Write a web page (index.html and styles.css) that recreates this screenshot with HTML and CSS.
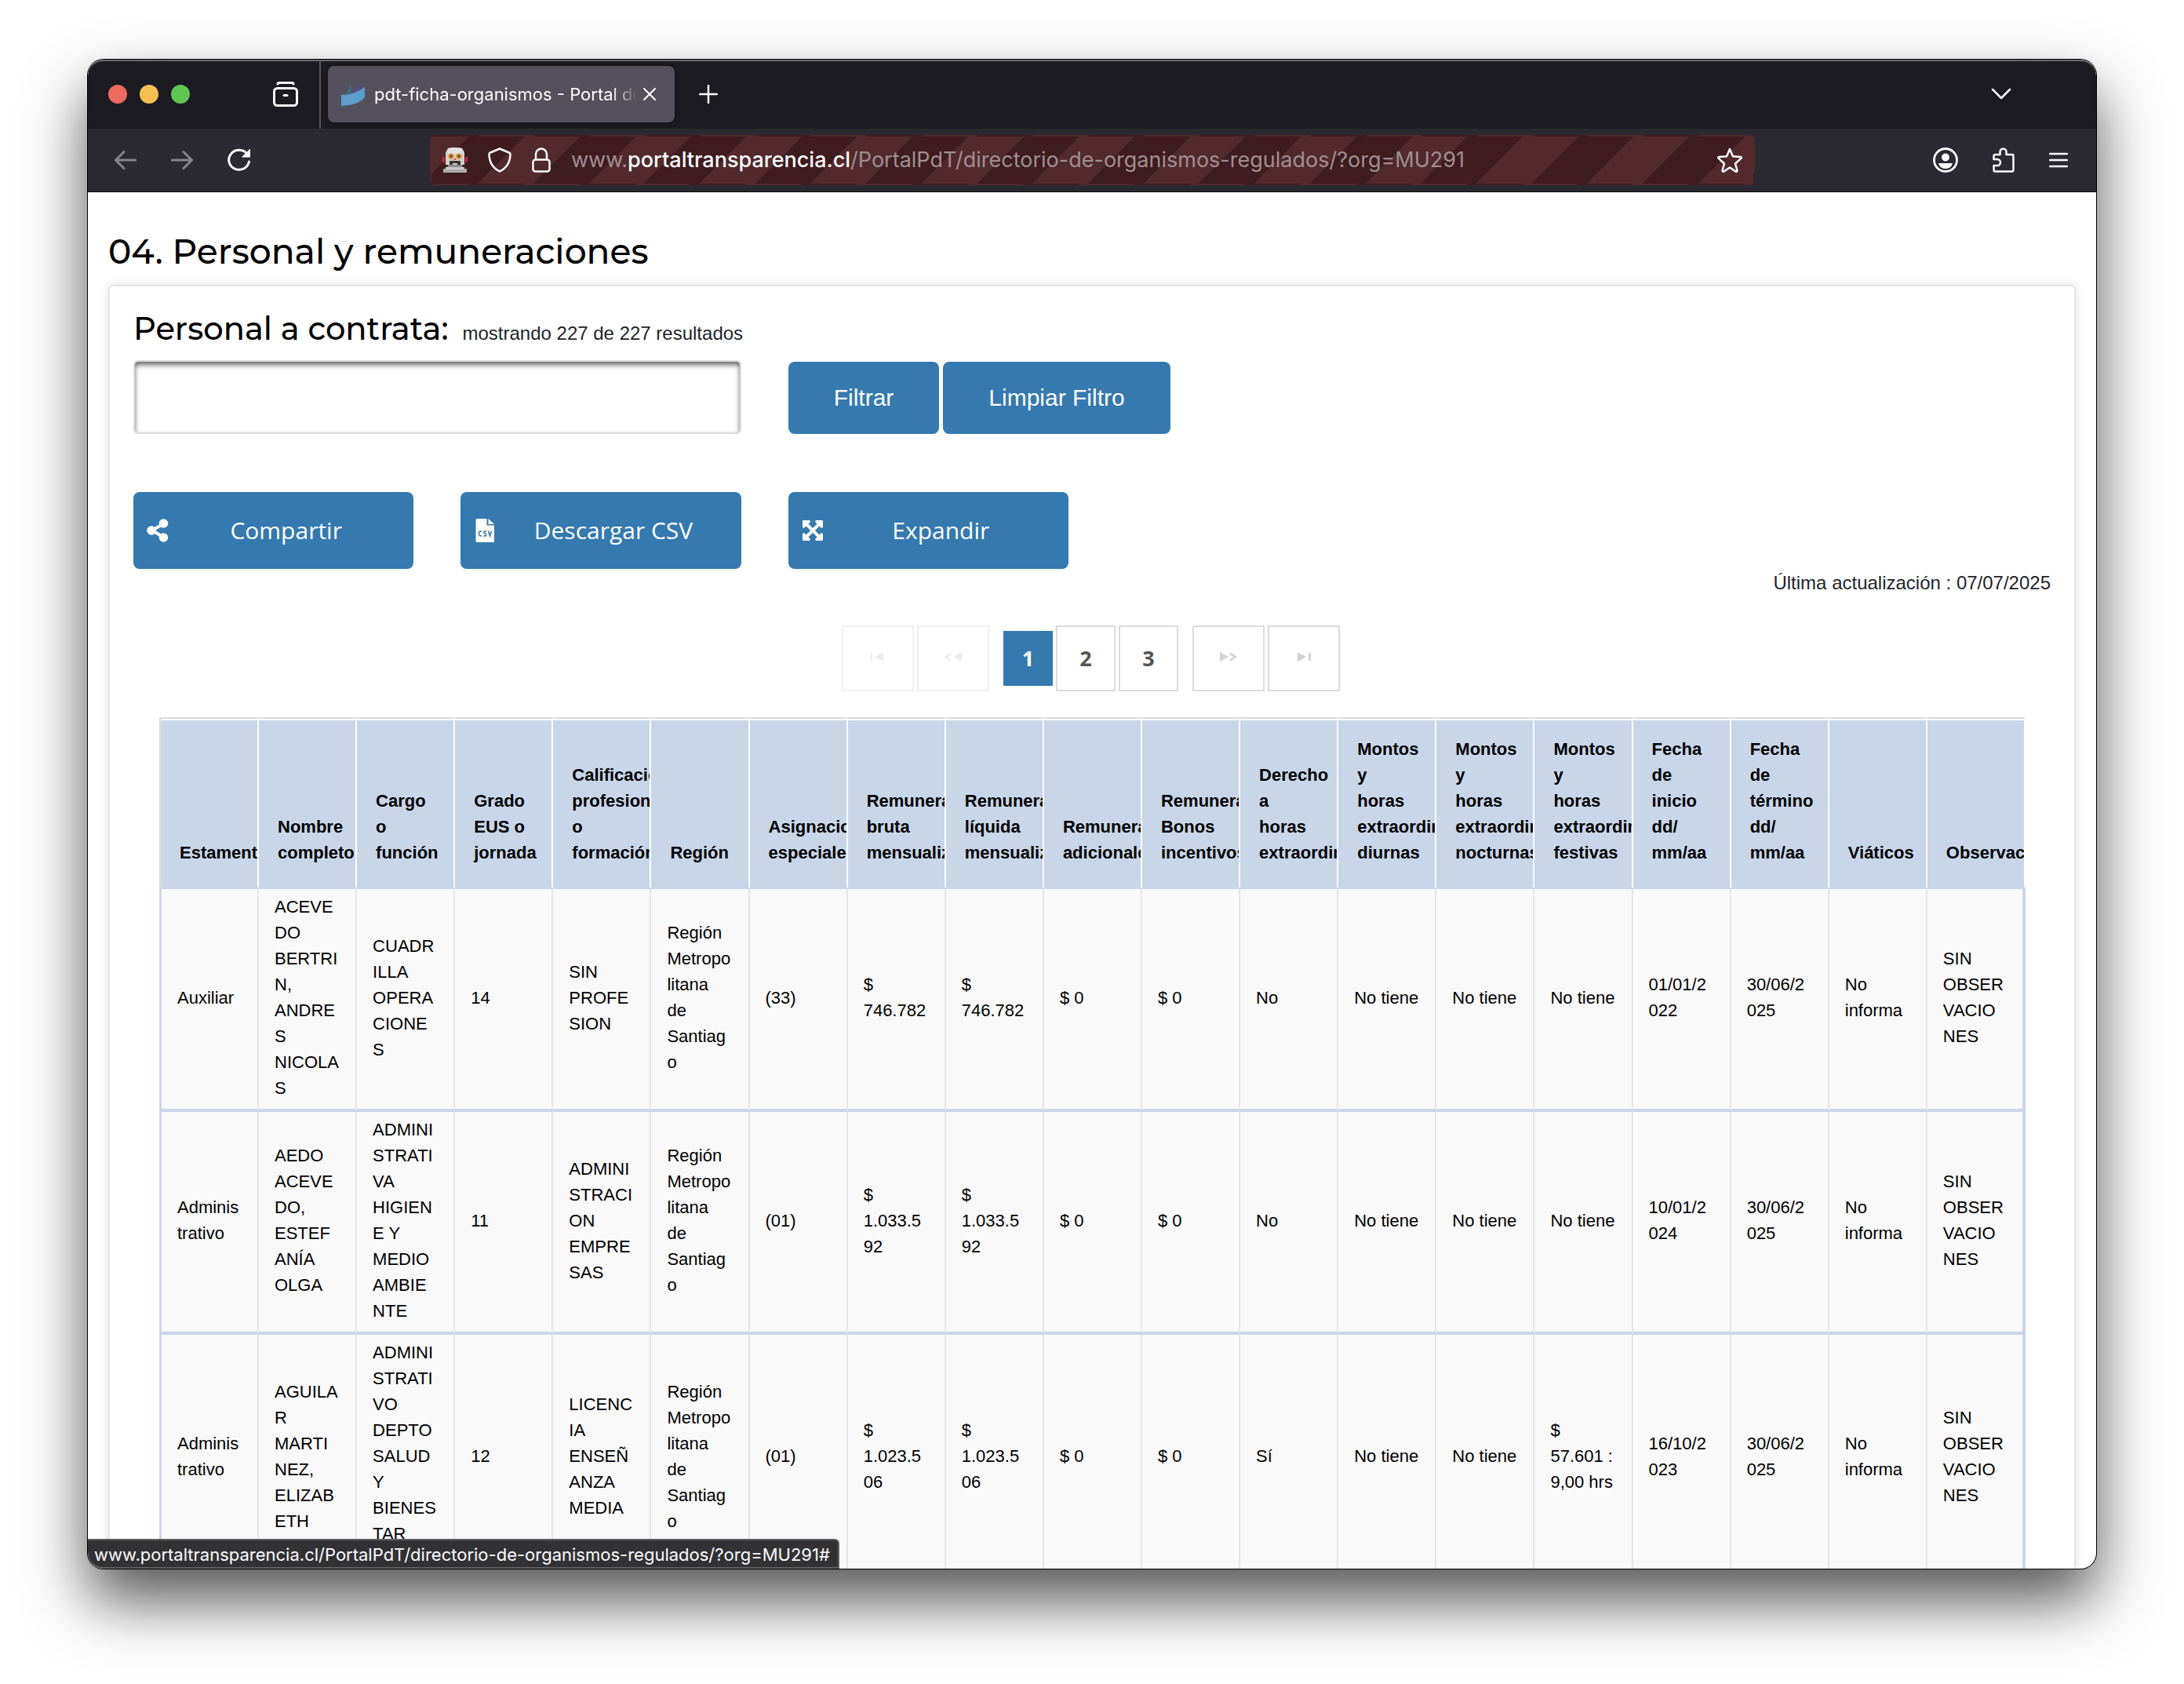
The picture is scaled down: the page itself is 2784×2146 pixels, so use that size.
FILE: index.html
```html
<!DOCTYPE html>
<html lang="es">
<head>
<meta charset="utf-8">
<title>pdt-ficha-organismos - Portal de Transparencia</title>
<link rel="stylesheet" href="styles.css">
</head>
<body>
<div class="window">
  <header class="tabbar">
    <div class="lights"><span class="light red"></span><span class="light yellow"></span><span class="light green"></span></div>
    <button class="icon-btn archive" aria-label="Firefox View">
      <svg width="32" height="32" viewBox="0 0 32 32" fill="none" stroke="#fbfbfe" stroke-width="3" stroke-linecap="round"><path d="M6 3Q6 1.500 8 1.500H24Q26 1.500 26 3"/><rect x="1.500" y="8.500" width="29" height="22" rx="4"/><path d="M14 17.500h4"/></svg>
    </button>
    <div class="tab">
      <svg class="favicon" width="30" height="30" viewBox="0 0 30 30"><path d="M5 15Q11 8 11 1Q14 6 12 14Z" fill="#3e6d7c"/><path d="M9 14Q20 8 23 0Q25 6 23 11Z" fill="#54508a"/><path d="M0 16Q16 16 30 6V19Q22 29 0 30Z" fill="#5c9fcf"/></svg>
      <span class="tab-title">pdt-ficha-organismos - Portal de Transparencia</span>
      <button class="icon-btn" aria-label="Cerrar pestaña"><svg width="16" height="16" viewBox="0 0 16 16" stroke="#fbfbfe" stroke-width="2" stroke-linecap="round"><path d="M1 1l14 14M15 1L1 15"/></svg></button>
    </div>
    <button class="icon-btn newtab" aria-label="Nueva pestaña"><svg width="24" height="24" viewBox="0 0 24 24" stroke="#fbfbfe" stroke-width="2.500" stroke-linecap="round"><path d="M12 1v22M1 12h22"/></svg></button>
    <button class="icon-btn alltabs" aria-label="Listar pestañas"><svg width="26" height="16" viewBox="0 0 26 16" fill="none" stroke="#fbfbfe" stroke-width="2.500" stroke-linecap="round" stroke-linejoin="round"><path d="M2 2l11 11L24 2"/></svg></button>
  </header>
  <div class="navbar">
    <div class="nav-left">
      <button class="icon-btn" aria-label="Atrás"><svg width="28" height="28" viewBox="0 0 28 28" fill="none" stroke="#85848a" stroke-width="3" stroke-linecap="round" stroke-linejoin="round"><path d="M27 14H2M12 3.500L1.500 14L12 24.500"/></svg></button>
      <button class="icon-btn" aria-label="Adelante"><svg width="28" height="28" viewBox="0 0 28 28" fill="none" stroke="#85848a" stroke-width="3" stroke-linecap="round" stroke-linejoin="round"><path d="M1 14h25M16 3.500L26.500 14L16 24.500"/></svg></button>
      <button class="icon-btn" aria-label="Recargar"><svg width="30" height="30" viewBox="0 0 30 30" fill="none" stroke="#fbfbfe" stroke-width="3" stroke-linecap="round"><path d="M27.500 17A13 12.500 0 1 1 24 6"/><path d="M28.500 1.500V11H19Z" fill="#fbfbfe" stroke-width="1" stroke-linejoin="round"/></svg></button>
    </div>
    <div class="urlbar">
      <svg width="32" height="32" viewBox="0 0 32 32"><path d="M0 11l3 2v7l-3-2zM32 11l-3 2v7l3-2z" fill="#c8283a"/><path d="M7 1Q16-1 25 1L28 6V22H4V6Z" fill="#cfcfcd"/><path d="M7 1Q16-1 25 1L25 8H7Z" fill="#e2e2e0"/><path d="M7 22h18l1 4H6z" fill="#8d8d8d"/><circle cx="11" cy="11" r="3.500" fill="#d98a2b"/><circle cx="21" cy="11" r="3.500" fill="#d98a2b"/><circle cx="11" cy="11" r="1.500" fill="#5b3a1a"/><circle cx="21" cy="11" r="1.500" fill="#5b3a1a"/><path d="M14 16l2-3 2 3z" fill="#e0542c"/><path d="M9 17h14v5h-4v-2h-6v2H9z" fill="#3b3230"/><path d="M1 27h30v5H1z" fill="#a9aaa9"/><path d="M4 25h24v3H4z" fill="#c9cac9"/></svg>
      <svg width="30" height="32" viewBox="0 0 30 32" fill="none" stroke="#fbfbfe" stroke-width="2.500" stroke-linejoin="round"><path d="M15 1.500L27 6.500Q28.500 7 28.500 9Q28 24 15 30.500Q2 24 1.500 9Q1.500 7 3 6.500Z"/></svg>
      <svg width="24" height="32" viewBox="0 0 24 32" fill="none" stroke="#fbfbfe" stroke-width="2.500"><rect x="1.500" y="15.500" width="21" height="15" rx="3"/><path d="M5 15.500V8.500a7 7 0 0 1 14 0v7"/></svg>
      <div class="url" role="textbox" aria-label="Dirección">www.<b>portaltransparencia.cl</b>/PortalPdT/directorio-de-organismos-regulados/?org=MU291</div>
      <button class="icon-btn" aria-label="Añadir a marcadores"><svg width="32" height="32" viewBox="0 0 32 32" fill="none" stroke="#fbfbfe" stroke-width="2.500" stroke-linejoin="round"><path d="M16 2l4 9.200 10.200.9q1 .5.300 1.500L23 20.500l2.500 9q-.5 1.500-2 1L16 25.500l-7.500 5q-1.500.5-2-1L9 20.500l-7.500-6.900q-.700-1 .3-1.500L12 11.200Z"/></svg></button>
    </div>
    <div class="nav-right">
      <button class="icon-btn" aria-label="Cuenta"><svg width="32" height="32" viewBox="0 0 32 32"><circle cx="16" cy="16" r="14.500" fill="none" stroke="#fbfbfe" stroke-width="2.800"/><circle cx="16" cy="12.500" r="5" fill="#fbfbfe"/><path d="M7 20h18q-1.500 7-9 7t-9-7z" fill="#fbfbfe"/></svg></button>
      <button class="icon-btn" aria-label="Extensiones"><svg width="28" height="32" viewBox="0 0 28 32" fill="none" stroke="#fbfbfe" stroke-width="2.500" stroke-linejoin="round"><path d="M1.500 15V11q0-2 2-2H9.500V5.500a4 4 0 0 1 8 0V9H25q1.500 0 1.500 2V28.500q0 2-2 2H3.500q-2 0-2-2V23H6a4 4 0 0 0 0-8Z"/></svg></button>
      <button class="icon-btn" aria-label="Menú"><svg width="24" height="22" viewBox="0 0 24 22" stroke="#fbfbfe" stroke-width="2.500" stroke-linecap="round"><path d="M1 3h22M1 11h22M1 19h22"/></svg></button>
    </div>
  </div>
  <main class="page">
    <h1>04. Personal y remuneraciones</h1>
    <section class="card">
      <div class="card-title"><h2><label for="filtro">Personal a contrata:</label></h2><span>mostrando 227 de 227 resultados</span></div>
      <form class="cols">
        <input id="filtro" class="filter" type="text">
        <div class="filter-actions">
          <button type="button" class="btn">Filtrar</button>
          <button type="button" class="btn">Limpiar Filtro</button>
        </div>
      </form>
      <div class="cols actions">
        <button class="btn action"><svg width="28" height="32" viewBox="0 0 28 32" fill="#fff"><path d="M7 16L22 7M7 16l15 9" stroke="#fff" stroke-width="4"/><circle cx="6" cy="16" r="5.800"/><circle cx="21.500" cy="7" r="5.800"/><circle cx="21.500" cy="25" r="5.800"/></svg><span>Compartir</span></button>
        <button class="btn action"><svg width="28" height="32" viewBox="0 0 28 32"><path d="M4 1H16.500V9.500H26V29.500Q26 31 24.500 31H4Q2.500 31 2.500 29.500V2.500Q2.500 1 4 1Z" fill="#fff"/><path d="M18.500 1L26 8H18.500Z" fill="#fff"/><path d="M10 17.500Q6.500 16 6.500 20Q6.500 24 10 22.500M16 17Q12.500 16.500 13 19Q16.500 20.500 15.500 22.500Q14 23.500 12.500 22.500M18.500 16.500L20.500 23L22.500 16.500" fill="none" stroke="#3579af" stroke-width="1.600"/></svg><span>Descargar CSV</span></button>
        <button class="btn action"><svg width="28" height="32" viewBox="0 0 28 32" fill="#fff"><path d="M4 6l20 20M24 6L4 26" stroke="#fff" stroke-width="4"/><path d="M1 4Q1 3 2 3H10L11 5L3 13L1 12ZM27 4Q27 3 26 3H18L17 5L25 13L27 12ZM1 28Q1 29 2 29H10L11 27L3 19L1 20ZM27 28Q27 29 26 29H18L17 27L25 19L27 20Z"/></svg><span>Expandir</span></button>
      </div>
      <p class="updated">Última actualización : 07/07/2025</p>
      <nav class="pager" aria-label="Paginación">
        <a class="step off" href="#" aria-label="Primera"><svg width="24" height="12" viewBox="0 0 24 12" fill="#d2d2d2"><path d="M3 1h2v10H3zM19 0v12L8 6z"/></svg></a>
        <a class="step off" href="#" aria-label="Anterior"><svg width="24" height="12" viewBox="0 0 24 12" fill="#d2d2d2"><path d="M23 0v12L12 6zM9 0L0 6l9 6V9L5 6l4-3z"/></svg></a>
        <div class="numbers">
          <a class="num current" href="#">1</a>
          <a class="num" href="#">2</a>
          <a class="num" href="#">3</a>
        </div>
        <a class="step" href="#" aria-label="Siguiente"><svg width="24" height="12" viewBox="0 0 24 12" fill="#d2d2d2"><path d="M1 0v12L12 6zM14 0L23 6l-9 6V9L18 6l-4-3z"/></svg></a>
        <a class="step" href="#" aria-label="Última"><svg width="24" height="12" viewBox="0 0 24 12" fill="#d2d2d2"><path d="M18 1h3v10h-3zM4 0v12L15 6z"/></svg></a>
      </nav>
      <table class="data">
        <thead>
          <tr>
            <th>Estamento</th><th>Nombre completo</th><th>Cargo o función</th><th>Grado EUS o jornada</th><th>Calificación profesional o formación</th><th>Región</th><th>Asignaciones especiales</th><th>Remuneración bruta mensualizada</th><th>Remuneración líquida mensualizada</th><th>Remuneraciones adicionales</th><th>Remuneración Bonos incentivos</th><th>Derecho a horas extraordinarias</th><th>Montos y horas extraordinarias diurnas</th><th>Montos y horas extraordinarias nocturnas</th><th>Montos y horas extraordinarias festivas</th><th>Fecha de inicio dd/<wbr>mm/aa</th><th>Fecha de término dd/<wbr>mm/aa</th><th>Viáticos</th><th>Observaciones</th>
          </tr>
        </thead>
        <tbody>
          <tr>
            <td>Auxiliar</td><td>ACEVEDO BERTRIN, ANDRES NICOLAS</td><td>CUADRILLA OPERACIONES</td><td>14</td><td>SIN PROFESION</td><td>Región Metropolitana de Santiago</td><td>(33)</td><td>$ 746.782</td><td>$ 746.782</td><td>$ 0</td><td>$ 0</td><td>No</td><td>No tiene</td><td>No tiene</td><td>No tiene</td><td class="date">01/01/2022</td><td class="date">30/06/2025</td><td>No informa</td><td>SIN OBSERVACIONES</td>
          </tr>
          <tr>
            <td>Administrativo</td><td>AEDO ACEVEDO, ESTEFANÍA OLGA</td><td>ADMINISTRATIVA HIGIENE Y MEDIO AMBIENTE</td><td>11</td><td>ADMINISTRACION EMPRESAS</td><td>Región Metropolitana de Santiago</td><td>(01)</td><td>$ 1.033.592</td><td>$ 1.033.592</td><td>$ 0</td><td>$ 0</td><td>No</td><td>No tiene</td><td>No tiene</td><td>No tiene</td><td class="date">10/01/2024</td><td class="date">30/06/2025</td><td>No informa</td><td>SIN OBSERVACIONES</td>
          </tr>
          <tr>
            <td>Administrativo</td><td>AGUILAR MARTINEZ, ELIZABETH</td><td>ADMINISTRATIVO DEPTO SALUD Y BIENESTAR<br>&nbsp;</td><td>12</td><td>LICENCIA ENSEÑANZA MEDIA</td><td>Región Metropolitana de Santiago</td><td>(01)</td><td>$ 1.023.506</td><td>$ 1.023.506</td><td>$ 0</td><td>$ 0</td><td>Sí</td><td>No tiene</td><td>No tiene</td><td>$ 57.601 : 9,00 hrs</td><td class="date">16/10/2023</td><td class="date">30/06/2025</td><td>No informa</td><td>SIN OBSERVACIONES</td>
          </tr>
        </tbody>
      </table>
    </section>
  </main>
  <div class="status">www.portaltransparencia.cl/PortalPdT/directorio-de-organismos-regulados/?org=MU291#</div>
</div>
</body>
</html>
```
FILE: styles.css
```css
* { box-sizing: border-box; }

body {
  margin: 0;
  height: 100vh;
  padding: 76px 112px 147px;
  background: #fff;
  color: #212529;
  font: 24px/36px "Liberation Sans", Arial, sans-serif;
}

.window {
  position: relative;
  display: flex;
  flex-direction: column;
  height: 100%;
  overflow: hidden;
  border-radius: 20px;
  background: #fff;
  box-shadow: 0 0 0 1px #000, 0 40px 80px rgba(0, 0, 0, 0.68);
}

.icon-btn {
  display: flex;
  flex: none;
  align-items: center;
  padding: 0;
  border: 0;
  background: none;
}

/* Browser chrome */

.tabbar {
  display: flex;
  flex: none;
  align-items: center;
  height: 88px;
  padding: 0 108px 2px 26px;
  background: #1c1b22;
  border-top: 2px solid #6a6a6c;
  border-radius: 20px 20px 0 0;
  font-family: Inter, sans-serif;
}

.lights { display: flex; gap: 16px; }
.light { width: 24px; height: 24px; border-radius: 50%; }
.red { background: #ed6a5e; }
.yellow { background: #f5bf4f; }
.green { background: #61c554; }

.archive { margin: 0 28px 0 106px; }

.tab {
  position: relative;
  display: flex;
  align-items: center;
  width: 442px;
  height: 72px;
  margin-left: 10px;
  padding: 0 24px 0 17px;
  border-radius: 8px;
  background: #54515c;
  box-shadow: 0 0 6px rgba(0, 0, 0, 0.5);
}

/* Divider between the pinned button and the tabs */
.tab::before {
  content: "";
  position: absolute;
  left: -11px;
  top: -8px;
  width: 2px;
  height: 88px;
  background: #55545c;
}

.favicon { flex: none; }

.tab-title {
  flex: 1;
  margin: 0 8px 0 12px;
  overflow: hidden;
  white-space: nowrap;
  color: #fbfbfe;
  font-size: 22px;
  -webkit-mask-image: linear-gradient(to left, transparent, #000 32px);
  mask-image: linear-gradient(to left, transparent, #000 32px);
}

.newtab { margin-left: 31px; }
.alltabs { margin-left: auto; }

.navbar {
  display: flex;
  flex: none;
  align-items: center;
  justify-content: space-between;
  height: 81px;
  padding: 0 36px 0 34px;
  background: #2b2a33;
  border-bottom: 1px solid #0c0c0d;
}

.nav-left { display: flex; gap: 44px; width: 402px; }
.nav-right { display: flex; align-items: center; gap: 44px; margin-left: 227px; }

.urlbar {
  display: flex;
  flex: 1;
  align-items: center;
  gap: 26px;
  height: 64px;
  padding: 0 14px;
  border: 2px solid transparent;
  border-radius: 8px;
  background: repeating-linear-gradient(-45deg, #52292c 0 50px, #3e1c1f 50px 100px);
}

.url {
  flex: 1;
  overflow: hidden;
  white-space: nowrap;
  color: #a08f93;
  font: 27px/40px Inter, sans-serif;
}
.url b { color: #fbfbfe; font-weight: 500; }

.status {
  position: absolute;
  left: 0;
  bottom: 0;
  padding: 2px 10px 0 8px;
  border: solid #5f5f61;
  border-width: 2px 2px 2px 0;
  border-radius: 0 6px 0 20px;
  background: #323234;
  color: #fbfbfe;
  font: 22px/32px Inter, sans-serif;
}

/* Page */

.page {
  flex: 1;
  min-height: 0;
  overflow: hidden;
  padding: 45px 26px 0;
}

h1, h2 {
  margin: 0;
  color: #000;
  font-family: Montserrat, Inter, sans-serif;
  font-weight: 500;
}
h1 { font-size: 44px; line-height: 60px; }
h2 { font-size: 40px; line-height: 48px; }

.card {
  margin-top: 13px;
  padding: 30px 30px 40px;
  border: 2px solid #e4e4e4;
  border-radius: 6px;
  background: #fff;
  box-shadow: 0 0 12px rgba(0, 0, 0, 0.14);
}

.card-title { display: flex; align-items: baseline; gap: 18px; height: 48px; }

.cols {
  display: grid;
  grid-template-columns: repeat(6, 1fr);
  gap: 60px;
  margin-top: 16px;
}

.filter {
  grid-column: span 2;
  width: 100%;
  height: 94px;
  padding: 0 24px;
  border: 2px solid #dcdcdc;
  border-radius: 6px;
  background: #fff;
  box-shadow: inset 0 4px 6px rgba(0, 0, 0, 0.6);
  font: inherit;
}

.filter-actions { grid-column: span 2; display: flex; gap: 5px; padding-top: 2px; }

.btn {
  padding: 0 58px;
  border: 0;
  border-radius: 8px;
  background: #3579af;
  color: #fff;
  font: 30px/40px "Liberation Sans", Arial, sans-serif;
}

.actions { margin-top: 74px; }

.action {
  display: flex;
  align-items: center;
  gap: 4px;
  height: 98px;
  padding: 0 17px;
  font-family: "Open Sans", sans-serif;
}
.action span { flex: 1; white-space: nowrap; }

.updated { margin: 0; text-align: right; }

.pager {
  display: flex;
  justify-content: center;
  gap: 4px;
  height: 84px;
  margin: 36px 0 33px;
  padding-right: 3px;
}

.numbers { display: flex; align-items: center; gap: 4px; margin: 0 14px; }

.step, .num {
  display: flex;
  align-items: center;
  justify-content: center;
  height: 84px;
  border: 2px solid #dcdcdc;
  color: #555;
  font: 700 27px/40px "Open Sans", sans-serif;
  text-decoration: none;
}
.step { width: 92px; padding-bottom: 5px; }
.num { width: 76px; }
.off { opacity: 0.4; }
.current { width: 63px; height: 70px; border: 0; background: #3579af; color: #fff; }

/* Staff table */

.data {
  width: calc(100% - 65px);
  margin: 0 32px 0 33px;
  table-layout: fixed;
  border-collapse: separate;
  border-spacing: 0;
  color: #000;
  font-size: 22px;
  line-height: 33px;
}

.data th {
  overflow: hidden;
  padding: 22px 28px 26px 24px;
  border: solid #fff;
  border-width: 2px 2px 4px 0;
  border-top-color: #dcdcdc;
  border-bottom-color: #c9d6e8;
  background: #c9d6e8;
  box-shadow: inset 0 2px 0 #fff;
  text-align: left;
  vertical-align: bottom;
}
.data th:first-child { width: 127px; border-left: 2px solid #dcdcdc; }

.data td {
  padding: 6px 20px 10px;
  border: solid #c9d6e8;
  border-width: 0 2px 4px 0;
  border-right-color: #e6e6e8;
  background: #f9f9f9;
  vertical-align: middle;
  overflow-wrap: anywhere;
}
.data td:first-child { border-left-width: 3px; }
.data td:last-child { border-right: 4px solid #c9d6e8; }
.data .date { word-break: break-all; }
```
